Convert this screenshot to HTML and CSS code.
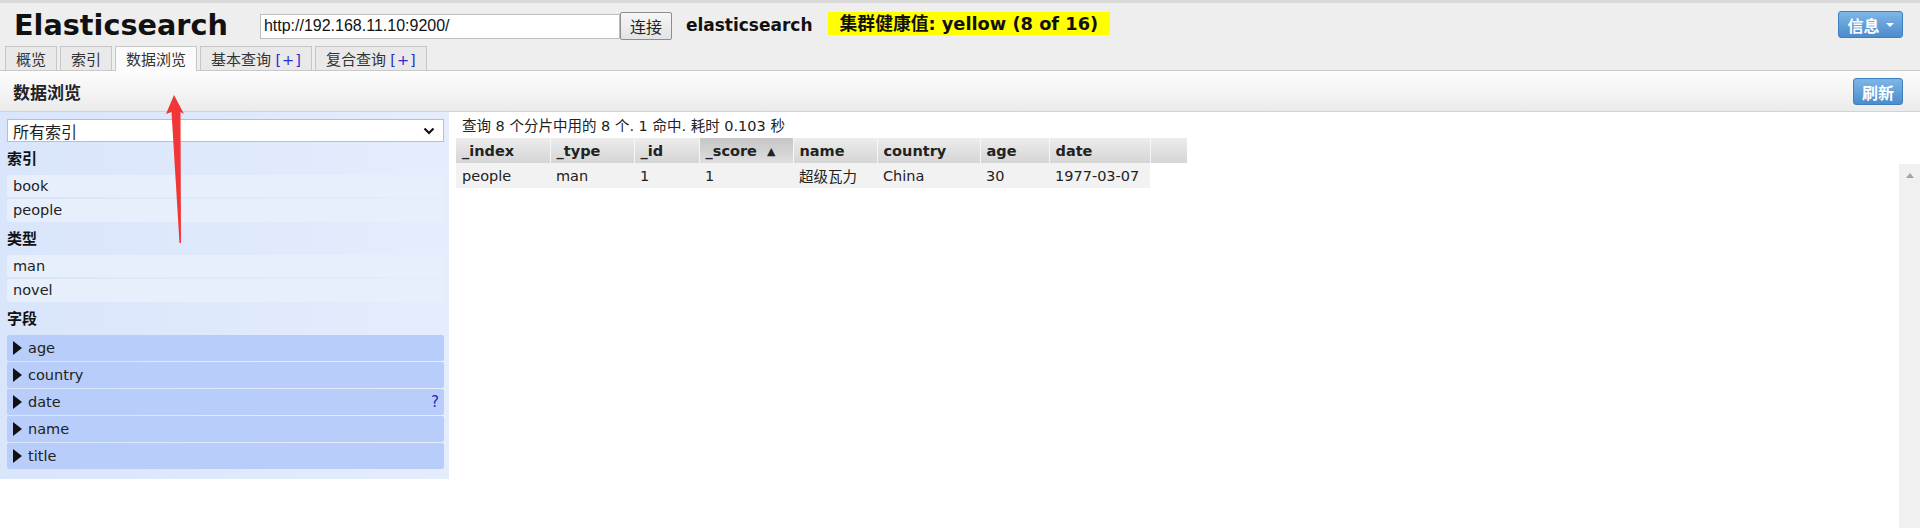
FILE: index.html
```html
<!DOCTYPE html>
<html lang="zh">
<head>
<meta charset="utf-8">
<title>Elasticsearch</title>
<link rel="stylesheet" href="styles.css">
</head>
<body>
<div class="topline"></div>
<header class="header">
  <div class="header-row">
    <h1 class="logo">Elasticsearch</h1>
    <input class="url" type="text" value="http://192.168.11.10:9200/">
    <button class="connect">连接</button>
    <span class="cluster-name">elasticsearch</span>
    <span class="health">集群健康值: yellow (8 of 16)</span>
    <button class="blue-btn info-btn">信息 <span class="caret"></span></button>
  </div>
  <nav class="tabs">
    <div class="tab">概览</div>
    <div class="tab">索引</div>
    <div class="tab active">数据浏览</div>
    <div class="tab">基本查询 <span class="plus">[+]</span></div>
    <div class="tab">复合查询 <span class="plus">[+]</span></div>
  </nav>
</header>
<div class="titlebar">
  <h2 class="title">数据浏览</h2>
  <button class="blue-btn refresh-btn">刷新</button>
</div>
<main class="browser">
  <aside class="sidebar">
    <div class="select">
      <span>所有索引</span>
      <svg class="chev" width="12" height="8" viewBox="0 0 12 8"><path d="M1.5 1.5 L6 6 L10.5 1.5" fill="none" stroke="#111" stroke-width="2.2"/></svg>
    </div>
    <div class="side-head">索引</div>
    <div class="item">book</div>
    <div class="item">people</div>
    <div class="side-head">类型</div>
    <div class="item">man</div>
    <div class="item">novel</div>
    <div class="side-head">字段</div>
    <div class="field"><span class="tri"></span><span class="fname">age</span></div>
    <div class="field"><span class="tri"></span><span class="fname">country</span></div>
    <div class="field"><span class="tri"></span><span class="fname">date</span><span class="q">?</span></div>
    <div class="field"><span class="tri"></span><span class="fname">name</span></div>
    <div class="field last"><span class="tri"></span><span class="fname">title</span></div>
  </aside>
  <section class="results">
    <div class="summary">查询 8 个分片中用的 8 个. 1 命中. 耗时 0.103 秒</div>
    <table class="thead">
      <colgroup>
        <col class="c-index"><col class="c-type"><col class="c-id"><col class="c-score"><col class="c-name"><col class="c-country"><col class="c-age"><col class="c-date"><col class="c-extra">
      </colgroup>
      <tr>
        <th>_index</th><th>_type</th><th>_id</th><th class="sorted">_score <span class="arrow">▲</span></th><th>name</th><th>country</th><th>age</th><th>date</th><th></th>
      </tr>
    </table>
    <div class="tbody-wrap">
      <div class="tbody-area">
        <table class="tbody">
          <colgroup>
            <col class="c-index"><col class="c-type"><col class="c-id"><col class="c-score"><col class="c-name"><col class="c-country"><col class="c-age"><col class="c-date">
          </colgroup>
          <tr>
            <td>people</td><td>man</td><td>1</td><td>1</td><td>超级瓦力</td><td>China</td><td>30</td><td>1977-03-07</td>
          </tr>
        </table>
      </div>
      <div class="scrollbar"><span class="up"></span></div>
    </div>
  </section>
</main>
<svg class="annotation" width="1920" height="528" viewBox="0 0 1920 528">
  <polygon points="174,95 184,114 180.5,112 181,243 179.5,243 171.5,112 166,114" fill="#f03636"/>
</svg>
</body>
</html>
```

FILE: styles.css
```css
html, body {
  margin: 0;
  padding: 0;
}
body {
  width: 1920px;
  height: 528px;
  overflow: hidden;
  display: flex;
  flex-direction: column;
  font-family: "DejaVu Sans", "Noto Sans CJK SC", sans-serif;
  font-size: 14.5px;
  color: #222;
  background: #fff;
  position: relative;
}
.topline {
  height: 3px;
  background: #d9d9d9;
  flex: none;
}
.header {
  background: #eeeeee;
  flex: none;
}
.header-row {
  height: 43px;
  display: flex;
  align-items: center;
  padding: 0 17px 0 14px;
}
.logo {
  margin: 0;
  font-family: "DejaVu Sans", sans-serif;
  font-weight: bold;
  font-size: 28.7px;
  color: #111;
  line-height: 1;
  margin-top: 1px;
}
.url {
  margin-left: 32px;
  width: 360px;
  height: 25px;
  box-sizing: border-box;
  border: 1px solid #bdbdbd;
  background: #fff;
  font-family: "Liberation Sans", Arial, sans-serif;
  font-size: 16px;
  padding: 0 3px;
  color: #111;
  margin-top: 3px;
}
.connect {
  width: 52px;
  height: 28px;
  box-sizing: border-box;
  border: 1px solid #8e8e8e;
  border-radius: 2px;
  background: linear-gradient(#f6f6f6, #e3e3e3);
  font-family: "Noto Sans CJK SC", sans-serif;
  font-size: 16px;
  color: #222;
  padding: 0;
  margin-top: 2px;
}
.cluster-name {
  margin-left: 14px;
  font-weight: bold;
  font-size: 17px;
  color: #111;
}
.health {
  margin-left: 15px;
  background: #ffff00;
  font-weight: bold;
  font-size: 17.8px;
  color: #111;
  height: 23px;
  line-height: 23px;
  padding: 0 12px;
  margin-top: -2px;
}
.blue-btn {
  box-sizing: border-box;
  height: 27px;
  border: 1px solid #3f7fc0;
  border-radius: 3px;
  background: linear-gradient(#7eb6e6, #4b8ccd);
  color: #fff;
  font-family: "Noto Sans CJK SC", sans-serif;
  font-weight: bold;
  font-size: 16px;
  padding: 0;
  display: flex;
  align-items: center;
  justify-content: center;
}
.info-btn {
  margin-left: auto;
  width: 65px;
  gap: 6px;
}
.caret {
  width: 0;
  height: 0;
  border-left: 4px solid transparent;
  border-right: 4px solid transparent;
  border-top: 4px solid #fff;
}
.tabs {
  display: flex;
  align-items: flex-end;
  gap: 3px;
  padding-left: 5px;
  height: 24px;
  border-bottom: 1px solid #c9c9c9;
}
.tab {
  box-sizing: border-box;
  height: 24px;
  border: 1px solid #c6c6c6;
  border-bottom: none;
  background: #e9e9e9;
  padding: 0 10px;
  font-family: "Noto Sans CJK SC", sans-serif;
  font-size: 15px;
  line-height: 23px;
  color: #333;
  white-space: nowrap;
}
.tab .plus {
  color: #2b2bd0;
  font-family: "DejaVu Sans", sans-serif;
  font-size: 14.5px;
  letter-spacing: 1px;
  margin-left: 1px;
  margin-right: -1px;
}
.tab.active {
  height: 25px;
  margin-bottom: -1px;
  background: #fbfbfb;
  line-height: 24px;
}
.titlebar {
  flex: none;
  height: 40px;
  border-bottom: 1px solid #d3d3d3;
  background: linear-gradient(#fdfdfd, #ebebeb);
  display: flex;
  align-items: center;
  padding: 0 17px 0 13px;
}
.title {
  margin: 0;
  font-family: "Noto Sans CJK SC", sans-serif;
  font-weight: bold;
  font-size: 17px;
  color: #222;
}
.refresh-btn {
  margin-left: auto;
  width: 50px;
  margin-top: 1px;
}
.browser {
  flex: 1;
  min-height: 0;
  display: flex;
  align-items: flex-start;
}
.sidebar {
  width: 449px;
  box-sizing: border-box;
  padding: 7px 5px 10px 7px;
  background: linear-gradient(to right, #d9e5fb, #e5edfd);
  flex: none;
}
.select {
  height: 23px;
  box-sizing: border-box;
  border: 1px solid #b9bfc8;
  background: #fff;
  display: flex;
  align-items: center;
  padding: 0 8px 0 5px;
  font-family: "Noto Sans CJK SC", sans-serif;
  font-size: 16px;
  color: #222;
}
.select .chev {
  margin-left: auto;
}
.side-head {
  height: 33px;
  box-sizing: border-box;
  padding-bottom: 2px;
  display: flex;
  align-items: center;
  font-family: "Noto Sans CJK SC", sans-serif;
  font-weight: bold;
  font-size: 15px;
  color: #111;
}
.item {
  height: 22px;
  line-height: 22px;
  padding-left: 6px;
  border-radius: 3px;
  background: #e7effd;
  color: #222;
}
.item + .item {
  margin-top: 2px;
  height: 23px;
}
.field {
  height: 26px;
  margin-bottom: 1px;
  border-radius: 2px;
  background: #b8cdf9;
  display: flex;
  align-items: center;
  padding: 0 5px 0 6px;
}
.field.last {
  margin-bottom: 0;
}
.tri {
  width: 0;
  height: 0;
  border-left: 9px solid #111;
  border-top: 7px solid transparent;
  border-bottom: 7px solid transparent;
  margin-right: 6px;
}
.fname {
  color: #222;
}
.q {
  margin-left: auto;
  color: #2424c8;
  font-size: 15px;
}
.results {
  flex: 1;
  align-self: stretch;
  margin-left: 7px;
  display: flex;
  flex-direction: column;
  min-width: 0;
}
.summary {
  height: 26px;
  box-sizing: border-box;
  padding: 2px 0 0 6px;
  line-height: 24px;
  font-size: 14.5px;
  color: #222;
}
table {
  border-collapse: collapse;
  table-layout: fixed;
}
.c-index { width: 94px; }
.c-type { width: 84px; }
.c-id { width: 65px; }
.c-score { width: 94px; }
.c-name { width: 84px; }
.c-country { width: 103px; }
.c-age { width: 69px; }
.c-date { width: 101px; }
.c-extra { width: 37px; }
.thead {
  width: 731px;
}
.thead th {
  height: 25px;
  padding: 0 0 0 6px;
  text-align: left;
  font-weight: bold;
  font-size: 14.5px;
  color: #222;
  background: linear-gradient(#ececec, #d5d5d5);
  border-left: 1px solid #f6f6f6;
  white-space: nowrap;
  overflow: hidden;
}
.thead th:first-child {
  border-left: none;
}
.thead th.sorted {
  background: linear-gradient(#c6c6c6, #dedede);
}
.thead .arrow {
  font-size: 11px;
  margin-left: 5px;
  vertical-align: 1px;
}
.tbody-wrap {
  flex: 1;
  display: flex;
  min-height: 0;
}
.tbody-area {
  flex: 1;
}
.tbody {
  width: 694px;
}
.tbody td {
  height: 25px;
  padding: 0 0 0 6px;
  background: #f2f2f2;
  color: #222;
  white-space: nowrap;
}
.scrollbar {
  width: 21px;
  margin-top: 1px;
  background: #f0f0f0;
  display: flex;
  justify-content: center;
  padding-top: 9px;
  box-sizing: border-box;
}
.scrollbar .up {
  width: 0;
  height: 0;
  border-left: 4.5px solid transparent;
  border-right: 4.5px solid transparent;
  border-bottom: 5px solid #a3a3a3;
}
.annotation {
  position: absolute;
  left: 0;
  top: 0;
  pointer-events: none;
}
```
